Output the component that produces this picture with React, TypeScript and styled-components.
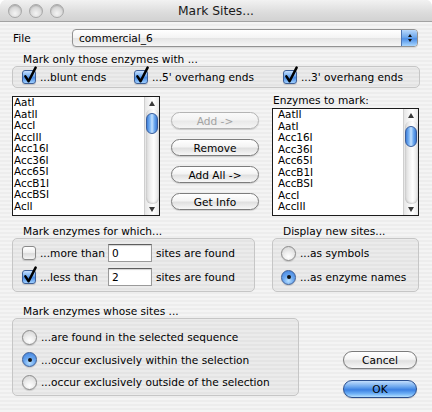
import styled, { createGlobalStyle, css } from "styled-components";

const GlobalStyle = createGlobalStyle`
  html, body {
    margin: 0;
    padding: 0;
    background: #fff;
  }
  body {
    font-family: "DejaVu Sans", "Liberation Sans", sans-serif;
    font-size: 10.6px;
    font-weight: 400;
    color: #000;
  }
  * {
    box-sizing: border-box;
  }
`;

const leftItems = ["AatI", "AatII", "AccI", "AccIII", "Acc16I", "Acc36I", "Acc65I", "AccB1I", "AccBSI", "AclI"];
const rightItems = ["AatII", "AatI", "Acc16I", "Acc36I", "Acc65I", "AccB1I", "AccBSI", "AccI", "AccIII"];

const CheckBox = ({ checked }: { checked?: boolean }) => (
  <Box $checked={checked}>
    {checked && (
      <CheckMark width="16" height="19" viewBox="0 0 16 19">
        <path d="M3.4 10.4 L6.6 15.2 L13.6 1.6" fill="none" stroke="#000" strokeWidth="2.5" strokeLinecap="round" strokeLinejoin="round" />
      </CheckMark>
    )}
  </Box>
);

const Radio = ({ on }: { on?: boolean }) => <RadioDot $on={on} />;

const ListBox = ({ items, width, height, pad, thumbTop }: { items: string[]; width: number; height: number; pad: number; thumbTop: number }) => (
  <List $w={width} $h={height}>
    <Items $pad={pad}>
      {items.map((it) => (
        <Item key={it}>{it}</Item>
      ))}
    </Items>
    <Scroll>
      <Arrow $up />
      <Track>
        <Thumb $top={thumbTop} />
      </Track>
      <Arrow />
    </Scroll>
  </List>
);

export default function App() {
  return (
    <>
      <GlobalStyle />
      <Window>
        <TitleBar>
          <Lights>
            <Light />
            <Light />
            <Light />
          </Lights>
          <Title>Mark Sites...</Title>
          <span />
        </TitleBar>
        <Body>
          <FileRow>
            <FileLabel>File</FileLabel>
            <Popup>
              <PopupText>commercial_6</PopupText>
              <Stepper>
                <StepArrow $up />
                <StepArrow />
              </Stepper>
            </Popup>
          </FileRow>

          <SectionLabel $mt={6}>Mark only those enzymes with ...</SectionLabel>
          <CheckGroup>
            <CheckItem $w={112}>
              <CheckBox checked />
              <span>...blunt ends</span>
            </CheckItem>
            <CheckItem $w={149}>
              <CheckBox checked />
              <span>...5' overhang ends</span>
            </CheckItem>
            <CheckItem>
              <CheckBox checked />
              <span>...3' overhang ends</span>
            </CheckItem>
          </CheckGroup>

          <ListsRow>
            <ListBox items={leftItems} width={148} height={120} pad={1} thumbTop={4} />
            <ButtonCol>
              <PushButton disabled>Add -&gt;</PushButton>
              <PushButton>Remove</PushButton>
              <PushButton>Add All -&gt;</PushButton>
              <PushButton>Get Info</PushButton>
            </ButtonCol>
            <RightCol>
              <Caption>Enzymes to mark:</Caption>
              <ListBox items={rightItems} width={147} height={108} pad={5} thumbTop={5} />
            </RightCol>
          </ListsRow>

          <GroupsRow>
            <Column $w={243}>
              <SectionLabel>Mark enzymes for which...</SectionLabel>
              <GroupBox $h={54} $pt={5} $gap={6}>
                <OptionRow>
                  <CheckBox />
                  <RowLabel>...more than</RowLabel>
                  <NumInput>0</NumInput>
                  <span>sites are found</span>
                </OptionRow>
                <OptionRow>
                  <CheckBox checked />
                  <RowLabel>...less than</RowLabel>
                  <NumInput>2</NumInput>
                  <span>sites are found</span>
                </OptionRow>
              </GroupBox>
            </Column>
            <Column $w={147}>
              <SectionLabel>Display new sites...</SectionLabel>
              <GroupBox $h={54} $pt={5} $gap={6} $pl={8}>
                <OptionRow>
                  <Radio />
                  <span>...as symbols</span>
                </OptionRow>
                <OptionRow>
                  <Radio on />
                  <span>...as enzyme names</span>
                </OptionRow>
              </GroupBox>
            </Column>
          </GroupsRow>

          <BottomRow>
            <Column $w={287}>
              <SectionLabel>Mark enzymes whose sites ...</SectionLabel>
              <GroupBox $h={78} $pt={9} $gap={4.5}>
                <OptionRow>
                  <Radio />
                  <span>...are found in the selected sequence</span>
                </OptionRow>
                <OptionRow>
                  <Radio on />
                  <span>...occur exclusively within the selection</span>
                </OptionRow>
                <OptionRow>
                  <Radio />
                  <span>...occur exclusively outside of the selection</span>
                </OptionRow>
              </GroupBox>
            </Column>
            <ActionCol>
              <PushButton $w={74} $h={18}>Cancel</PushButton>
              <PushButton $w={74} $h={18} $default>OK</PushButton>
            </ActionCol>
          </BottomRow>
        </Body>
      </Window>
    </>
  );
}

const Window = styled.div`
  width: 432px;
  height: 412px;
  overflow: hidden;
  display: flex;
  flex-direction: column;
  border-radius: 6px 6px 0 0;
  background: repeating-linear-gradient(to bottom, #ededed 0, #ededed 2px, #f4f4f4 2px, #f4f4f4 4px);
`;

const TitleBar = styled.div`
  height: 22px;
  flex: none;
  display: grid;
  grid-template-columns: 1fr auto 1fr;
  align-items: center;
  padding-left: 8px;
  border-radius: 6px 6px 0 0;
  border-bottom: 1px solid #a2a2a2;
  background: linear-gradient(#f2f2f2, #dcdcdc 60%, #d2d2d2);
`;

const Lights = styled.div`
  display: flex;
  gap: 7px;
`;

const Light = styled.span`
  width: 14px;
  height: 14px;
  border-radius: 50%;
  border: 1px solid #a8a8a8;
  background: radial-gradient(circle at 50% 70%, #f4f4f4 0, #dedede 45%, #bdbdbd 100%);
  box-shadow: inset 0 1px 1px rgba(0, 0, 0, 0.15);
`;

const Title = styled.div`
  font-size: 12.3px;
  color: #1a1a1a;
  margin-left: -8px;
`;

const Body = styled.div`
  display: flex;
  flex-direction: column;
  padding: 0 12px;
`;

const FileRow = styled.div`
  margin-top: 7px;
  height: 18px;
  display: flex;
  align-items: center;
`;

const FileLabel = styled.div`
  width: 60px;
  padding-left: 1px;
`;

const Popup = styled.div`
  width: 346px;
  height: 18px;
  display: flex;
  align-items: center;
  border: 1px solid #929292;
  border-radius: 4px;
  background: linear-gradient(#ffffff, #f3f3f3 50%, #e4e4e4 51%, #f6f6f6);
  box-shadow: 0 1px 1px rgba(0, 0, 0, 0.12);
  overflow: hidden;
`;

const PopupText = styled.div`
  flex: 1;
  padding-left: 6px;
`;

const Stepper = styled.div`
  width: 16px;
  height: 100%;
  display: flex;
  flex-direction: column;
  align-items: center;
  justify-content: center;
  gap: 2px;
  border-left: 1px solid #4d76b4;
  background: linear-gradient(#b9d8fb, #6ea8ec 45%, #4d8fe6 55%, #a8d6ff);
`;

const StepArrow = styled.span<{ $up?: boolean }>`
  width: 0;
  height: 0;
  border-left: 2.5px solid transparent;
  border-right: 2.5px solid transparent;
  ${(p) => (p.$up ? "border-bottom: 3px solid #111;" : "border-top: 3px solid #111;")}
`;

const SectionLabel = styled.div<{ $mt?: number }>`
  height: 13px;
  line-height: 13px;
  padding-left: 11px;
  margin-top: ${(p) => p.$mt ?? 0}px;
  white-space: nowrap;
`;

const GroupBox = styled.div<{ $h: number; $pt: number; $gap: number; $pl?: number }>`
  height: ${(p) => p.$h}px;
  display: flex;
  flex-direction: column;
  gap: ${(p) => p.$gap}px;
  padding: ${(p) => p.$pt}px 0 0 ${(p) => p.$pl ?? 9}px;
  border: 1px solid #c6c6c6;
  border-radius: 5px;
  background: rgba(0, 0, 0, 0.035);
`;

const CheckGroup = styled.div`
  height: 22px;
  display: flex;
  align-items: center;
  padding-left: 9px;
  border: 1px solid #c6c6c6;
  border-radius: 5px;
  background: rgba(0, 0, 0, 0.035);
`;

const CheckItem = styled.div<{ $w?: number }>`
  display: flex;
  align-items: center;
  gap: 4px;
  width: ${(p) => (p.$w ? `${p.$w}px` : "auto")};
  white-space: nowrap;
`;

const Box = styled.span<{ $checked?: boolean }>`
  position: relative;
  flex: none;
  width: 14px;
  height: 14px;
  border-radius: 3px;
  border: 1px solid #8a8a8a;
  background: linear-gradient(#ffffff, #f0f0f0 45%, #dcdcdc 55%, #f4f4f4);
  box-shadow: 0 1px 1px rgba(0, 0, 0, 0.15);
  ${(p) =>
    p.$checked &&
    css`
      border-color: #3e5f96;
      background: linear-gradient(#c6e0ff, #76aef0 40%, #4a8ce6 55%, #9fd0ff);
    `}
`;

const CheckMark = styled.svg`
  position: absolute;
  left: -1px;
  top: -5px;
`;

const RadioDot = styled.span<{ $on?: boolean }>`
  position: relative;
  flex: none;
  width: 15px;
  height: 15px;
  border-radius: 50%;
  border: 1px solid #8a8a8a;
  background: radial-gradient(circle at 50% 75%, #ffffff 0, #eeeeee 40%, #cfcfcf 100%);
  box-shadow: 0 1px 1px rgba(0, 0, 0, 0.15);
  ${(p) =>
    p.$on &&
    css`
      border-color: #3e5f96;
      background: radial-gradient(circle at 50% 75%, #b8e0ff 0, #6aa6ee 45%, #3f80dc 100%);
      &::after {
        content: "";
        position: absolute;
        left: 4.5px;
        top: 4.5px;
        width: 4px;
        height: 4px;
        border-radius: 50%;
        background: #111;
      }
    `}
`;

const ListsRow = styled.div`
  margin-top: 8px;
  display: flex;
  height: 120px;
`;

const List = styled.div<{ $w: number; $h: number }>`
  width: ${(p) => p.$w}px;
  height: ${(p) => p.$h}px;
  flex: none;
  display: flex;
  border: 1px solid #1c1c1c;
  background: #fff;
  overflow: hidden;
`;

const Items = styled.div<{ $pad: number }>`
  flex: 1;
  padding-left: ${(p) => p.$pad}px;
  overflow: hidden;
`;

const Item = styled.div`
  height: 11.5px;
  line-height: 11.5px;
  font-size: 10.4px;
  white-space: nowrap;
`;

const Scroll = styled.div`
  width: 15px;
  flex: none;
  display: flex;
  flex-direction: column;
  align-items: center;
  border-left: 1px solid #cfcfcf;
  background: linear-gradient(to right, #e6e6e6, #f8f8f8 40%, #ffffff 60%, #e9e9e9);
`;

const Arrow = styled.span<{ $up?: boolean }>`
  flex: none;
  width: 0;
  height: 0;
  margin-top: ${(p) => (p.$up ? 4 : 3)}px;
  margin-bottom: 3px;
  border-left: 3.5px solid transparent;
  border-right: 3.5px solid transparent;
  ${(p) => (p.$up ? "border-bottom: 5px solid #3a3a3a;" : "border-top: 5px solid #3a3a3a;")}
`;

const Track = styled.div`
  flex: 1;
  width: 13px;
  display: flex;
  flex-direction: column;
  align-items: center;
  border-radius: 6px;
  background: linear-gradient(to right, #d8d8d8, #f2f2f2 35%, #ffffff 60%, #e2e2e2);
  box-shadow: inset 0 -1px 2px rgba(0, 0, 0, 0.18);
`;

const Thumb = styled.div<{ $top: number }>`
  margin-top: ${(p) => p.$top}px;
  width: 12px;
  height: 21px;
  border-radius: 6px;
  border: 1px solid #3b5f9c;
  background: linear-gradient(to right, #3f7fd9, #7db6f5 30%, #c4e2ff 50%, #6aa7ef 75%, #3d7bd4);
`;

const ButtonCol = styled.div`
  margin-left: 11px;
  width: 88px;
  padding-top: 16px;
  display: flex;
  flex-direction: column;
  gap: 10px;
`;

const RightCol = styled.div`
  margin-left: 13px;
  display: flex;
  flex-direction: column;
  justify-content: flex-end;
`;

const Caption = styled.div`
  height: 12px;
  line-height: 8px;
  padding-left: 1px;
`;

const PushButton = styled.button<{ $w?: number; $h?: number; $default?: boolean }>`
  width: ${(p) => (p.$w ? `${p.$w}px` : "100%")};
  height: ${(p) => p.$h ?? 17}px;
  padding: 0;
  font-family: inherit;
  font-size: 10.6px;
  font-weight: 400;
  color: #000;
  border: 1px solid #7c7c7c;
  border-radius: 9px;
  background: linear-gradient(#ffffff, #f4f4f4 45%, #e0e0e0 55%, #f7f7f7);
  box-shadow: 0 1px 1px rgba(0, 0, 0, 0.15);
  &:disabled {
    color: #a3a3a3;
    border-color: #b4b4b4;
    background: linear-gradient(#fafafa, #f3f3f3 45%, #e9e9e9 55%, #f5f5f5);
  }
  ${(p) =>
    p.$default &&
    css`
      border-color: #2b4f8e;
      background: linear-gradient(#c2defd, #6ea8ee 35%, #3b80e2 55%, #6fb1f6 80%, #b5e0ff);
    `}
`;

const GroupsRow = styled.div`
  margin-top: 9px;
  display: flex;
  gap: 17px;
`;

const Column = styled.div<{ $w: number }>`
  width: ${(p) => p.$w}px;
  flex: none;
  display: flex;
  flex-direction: column;
`;

const OptionRow = styled.div`
  height: 18px;
  display: flex;
  align-items: center;
  gap: 4px;
  white-space: nowrap;
`;

const RowLabel = styled.span`
  width: 64px;
`;

const NumInput = styled.div`
  width: 44px;
  height: 18px;
  line-height: 16px;
  padding-left: 3px;
  background: #fff;
  border: 1px solid #9a9a9a;
  border-top-color: #5e5e5e;
  box-shadow: inset 0 1px 1px rgba(0, 0, 0, 0.18);
`;

const BottomRow = styled.div`
  margin-top: 13px;
  display: flex;
`;

const ActionCol = styled.div`
  flex: 1;
  display: flex;
  flex-direction: column;
  align-items: flex-end;
  padding-top: 46px;
  padding-right: 3px;
  gap: 11px;
`;
